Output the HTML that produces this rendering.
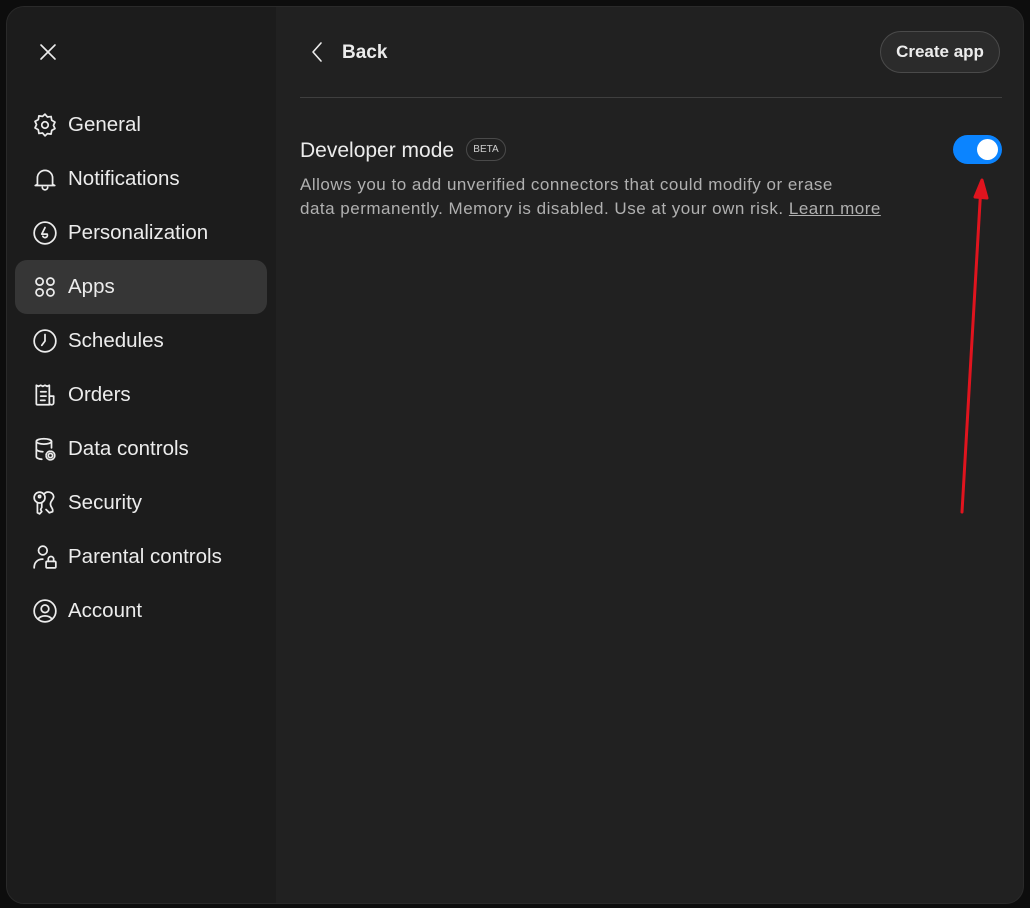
<!DOCTYPE html>
<html><head><meta charset="utf-8"><style>
html,body{margin:0;padding:0;width:1030px;height:908px;background:#0d0d0d;overflow:hidden;font-family:"Liberation Sans",sans-serif;color:#ececec}
.modal{position:absolute;left:6px;top:6px;width:1018px;height:898px;border-radius:18px;background:#212121;overflow:hidden;border:1px solid #2a2a2a;box-sizing:border-box}
.side{position:absolute;left:0;top:0;width:269px;height:100%;background:#1c1c1c}
.item{position:absolute;left:8px;width:252px;height:54px;border-radius:12px;display:flex;align-items:center;font-size:20.5px}
.item svg{position:absolute;left:17px;top:14px}
.item span{position:absolute;left:53px}
.sel{background:#363636}
svg{fill:none;stroke:#ececec;stroke-width:1.6;stroke-linecap:round;stroke-linejoin:round}
</style></head><body>
<div class="modal">
<div class="side">
<svg width="20" height="20" style="position:absolute;left:31px;top:35px" viewBox="0 0 20 20"><path d="M3 3L17 17M17 3L3 17"/></svg>
<div class="item" style="top:91px"><svg width="26" height="26" viewBox="0 0 24 24"><circle cx="12" cy="12" r="3"/><path d="M12 2l2.2 2.6 3.4-.4.6 3.4 3 1.7-1.4 3 1.4 3-3 1.7-.6 3.4-3.4-.4L12 22l-2.2-2.6-3.4.4-.6-3.4-3-1.7 1.4-3-1.4-3 3-1.7.6-3.4 3.4.4z"/></svg><span>General</span></div>
<div class="item" style="top:145px"><svg width="26" height="26" viewBox="0 0 24 24"><path d="M5 17V11a7 7 0 0114 0v6l2 1H3z"/><path d="M9.5 19.5a2.5 2.5 0 005 0"/></svg><span>Notifications</span></div>
<div class="item" style="top:199px"><svg width="26" height="26" viewBox="0 0 24 24"><circle cx="12" cy="12" r="10"/><path d="M12 7l-3 6h5a2 2 0 01-4 2"/></svg><span>Personalization</span></div>
<div class="item sel" style="top:253px"><svg width="26" height="26" viewBox="0 0 24 24"><circle cx="7" cy="7" r="3.3"/><circle cx="17" cy="7" r="3.3"/><circle cx="7" cy="17" r="3.3"/><circle cx="17" cy="17" r="3.3"/></svg><span>Apps</span></div>
<div class="item" style="top:307px"><svg width="26" height="26" viewBox="0 0 24 24"><circle cx="12" cy="12" r="10"/><path d="M12 6v6l-3 4"/></svg><span>Schedules</span></div>
<div class="item" style="top:361px"><svg width="26" height="26" viewBox="0 0 24 24"><path d="M16 21H5a1 1 0 01-1-1V3l2 1 2-1 2 1 2-1 2 1 2-1v18"/><path d="M16 13h4v6a2 2 0 01-4 0M8 9h5M8 13h5M8 17h4"/></svg><span>Orders</span></div>
<div class="item" style="top:415px"><svg width="26" height="26" viewBox="0 0 24 24"><ellipse cx="11" cy="5" rx="7" ry="2.5"/><path d="M4 5v14c0 1.4 2.5 2.3 5 2.5M18 5v6M4 12c0 1.4 3 2.5 6 2.5"/><circle cx="17" cy="18" r="2"/><circle cx="17" cy="18" r="4" stroke-dasharray="2 1.2"/></svg><span>Data controls</span></div>
<div class="item" style="top:469px"><svg width="26" height="26" viewBox="0 0 24 24"><circle cx="7" cy="7" r="5"/><circle cx="7" cy="6" r="1"/><path d="M5 12v9l2 1 2-2-1-2 1-2v-4M11 4a5 5 0 019 2c0 3-3 4-3 7 0 3 3 4 2 7l-3 1-3-3"/></svg><span>Security</span></div>
<div class="item" style="top:523px"><svg width="26" height="26" viewBox="0 0 24 24"><circle cx="10" cy="6" r="4"/><path d="M2 22c0-5 3-8 8-8"/><rect x="13" y="16" width="9" height="6" rx="1"/><path d="M15 16v-2a2.5 2.5 0 015 0v2"/></svg><span>Parental controls</span></div>
<div class="item" style="top:577px"><svg width="26" height="26" viewBox="0 0 24 24"><circle cx="12" cy="12" r="10"/><circle cx="12" cy="10" r="3.5"/><path d="M5.5 19.5c3-4 10-4 13 0"/></svg><span>Account</span></div>
</div>
<svg width="16" height="22" style="position:absolute;left:302px;top:34px" viewBox="0 0 16 22"><path d="M12 2L4 11l8 9"/></svg>
<div style="position:absolute;left:335px;top:35px;font-size:19px;font-weight:bold">Back</div>
<div style="position:absolute;left:873px;top:24px;width:120px;height:42px;box-sizing:border-box;border:1px solid #4a4a4a;border-radius:21px;background:#2b2b2b;font-size:17px;font-weight:bold;text-align:center;line-height:40px">Create app</div>
<div style="position:absolute;left:293px;top:90px;width:702px;height:1px;background:#3f3f3f"></div>
<div style="position:absolute;left:293px;top:132px;font-size:21px">Developer mode</div>
<div style="position:absolute;left:459px;top:131px;width:40px;height:23px;box-sizing:border-box;border:1px solid #4a4a4a;border-radius:12px;font-size:10px;text-align:center;line-height:21px;color:#cfcfcf">BETA</div>
<div style="position:absolute;left:946px;top:128px;width:49px;height:29px;border-radius:15px;background:#0b84ff"><div style="position:absolute;right:4px;top:4px;width:21px;height:21px;border-radius:50%;background:#fff"></div></div>
<div style="position:absolute;left:293px;top:166px;white-space:nowrap;font-size:17px;letter-spacing:0.5px;line-height:24px;color:#b0b0b0">Allows you to add unverified connectors that could modify or erase<br>data permanently. Memory is disabled. Use at your own risk. <u>Learn more</u></div>
</div>
<svg width="1030" height="908" style="position:absolute;left:0;top:0;stroke:#e0141e;stroke-width:3"><path d="M962 512L981 185"/><path d="M975 197L982 180 987 198z" fill="#e0141e"/></svg>
</body></html>
